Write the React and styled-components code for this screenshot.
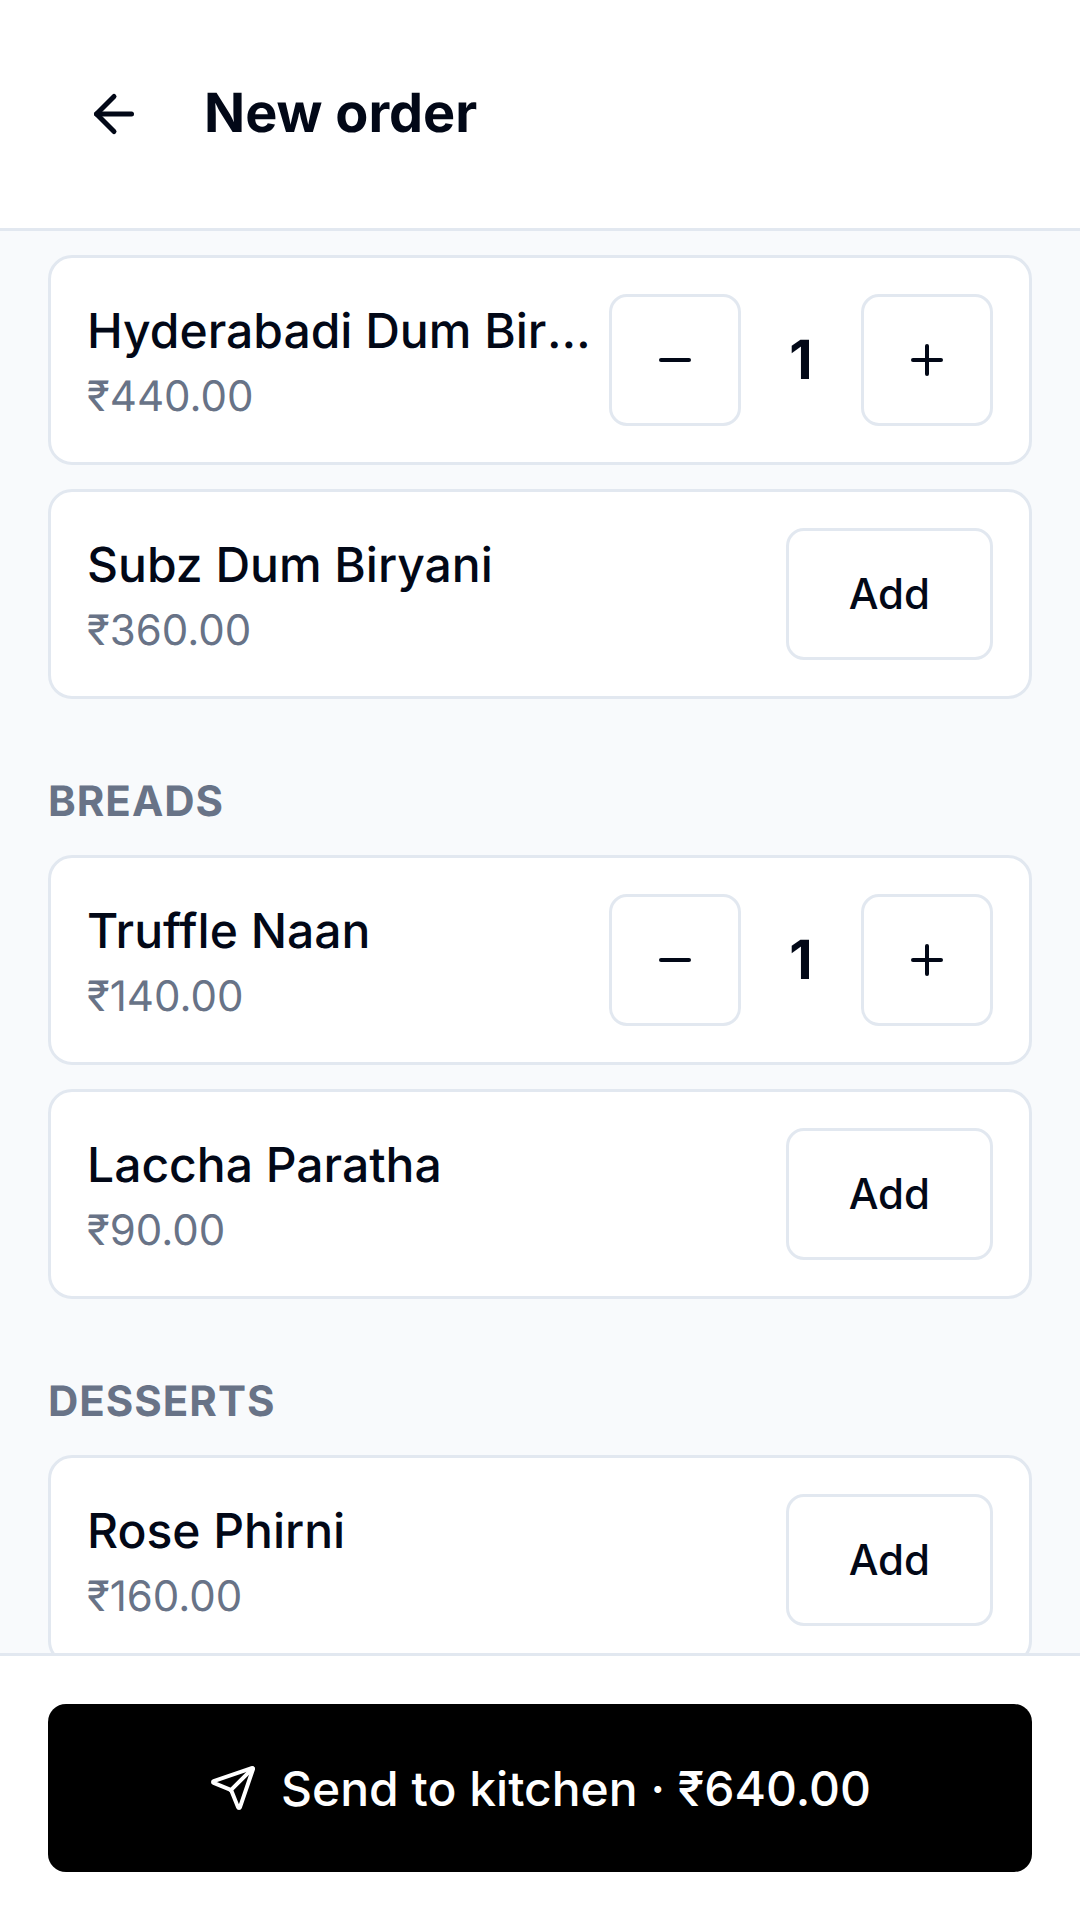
import React from "react";
import styled, { createGlobalStyle } from "styled-components";
import { ArrowLeft, Minus, Plus, Send } from "lucide-react";

const GlobalStyle = createGlobalStyle`
  html, body {
    margin: 0;
    padding: 0;
    background: #ffffff;
  }
  * {
    box-sizing: border-box;
  }
`;

const Screen = styled.div`
  width: 1080px;
  height: 1920px;
  display: flex;
  flex-direction: column;
  overflow: hidden;
  background: #f8fafc;
  color: #020817;
  font-family: Inter, "Liberation Sans", sans-serif;
  text-rendering: geometricPrecision;
`;

const Header = styled.header`
  flex: none;
  height: 231px;
  display: flex;
  align-items: center;
  gap: 24px;
  padding: 0 48px;
  background: #ffffff;
  border-bottom: 3px solid #e2e8f0;
`;

const IconButton = styled.button`
  width: 132px;
  height: 132px;
  display: flex;
  align-items: center;
  justify-content: center;
  padding: 0;
  border: none;
  background: transparent;
  color: #020817;
`;

const Title = styled.h1`
  margin: 0;
  font-size: 54px;
  line-height: 72px;
  font-weight: 700;
`;

const List = styled.main`
  flex: 1;
  min-height: 0;
  overflow: hidden;
  display: flex;
  flex-direction: column;
  gap: 72px;
  padding: 24px 48px;
`;

const Section = styled.section`
  flex: none;
  display: flex;
  flex-direction: column;
  gap: 24px;
`;

const SectionLabel = styled.h2`
  margin: 0;
  padding-top: 1px;
  height: 60px;
  font-size: 42px;
  line-height: 60px;
  font-weight: 700;
  letter-spacing: 1px;
  text-transform: uppercase;
  color: #687387;
`;

const Card = styled.div`
  height: 210px;
  display: flex;
  align-items: center;
  gap: 12px;
  padding: 0 36px;
  background: #ffffff;
  border: 3px solid #e2e8f0;
  border-radius: 24px;
`;

const ItemInfo = styled.div`
  flex: 1;
  min-width: 0;
  padding-top: 2px;
`;

const ItemName = styled.div`
  font-size: 48px;
  line-height: 72px;
  font-weight: 500;
  white-space: nowrap;
  overflow: hidden;
  text-overflow: ellipsis;
`;

const ItemPrice = styled.div`
  font-size: 42px;
  line-height: 60px;
  color: #687387;
`;

const Stepper = styled.div`
  flex: none;
  display: flex;
  align-items: center;
  gap: 12px;
`;

const OutlineButton = styled.button`
  flex: none;
  height: 132px;
  min-width: 132px;
  display: flex;
  align-items: center;
  justify-content: center;
  padding: 0 ${(p) => (p.$text ? "60px 2px" : "0")};
  background: #ffffff;
  border: 3px solid #e2e8f0;
  border-radius: 18px;
  color: #020817;
  font-family: inherit;
  font-size: 42px;
  font-weight: 500;
`;

const Qty = styled.span`
  width: 96px;
  text-align: center;
  font-size: 54px;
  font-weight: 700;
`;

const Footer = styled.footer`
  flex: none;
  height: 267px;
  padding: 48px 48px 0;
  background: #ffffff;
  border-top: 3px solid #e2e8f0;
`;

const SendButton = styled.button`
  width: 100%;
  height: 168px;
  display: flex;
  align-items: center;
  justify-content: center;
  gap: 24px;
  background: #000000;
  border: none;
  border-radius: 18px;
  color: #ffffff;
  font-family: inherit;
  font-size: 48px;
  font-weight: 500;
`;

const sections = [
  {
    items: [
      { name: "Hyderabadi Dum Biryani", price: "₹440.00", qty: 1 },
      { name: "Subz Dum Biryani", price: "₹360.00" },
    ],
  },
  {
    label: "Breads",
    items: [
      { name: "Truffle Naan", price: "₹140.00", qty: 1 },
      { name: "Laccha Paratha", price: "₹90.00" },
    ],
  },
  {
    label: "Desserts",
    items: [
      { name: "Rose Phirni", price: "₹160.00" },
      { name: "Gulab Jamun", price: "₹120.00" },
    ],
  },
];

const ItemCard = ({ name, price, qty }) => (
  <Card>
    <ItemInfo>
      <ItemName>{name}</ItemName>
      <ItemPrice>{price}</ItemPrice>
    </ItemInfo>
    {qty ? (
      <Stepper>
        <OutlineButton>
          <Minus size={48} strokeWidth={2} />
        </OutlineButton>
        <Qty>{qty}</Qty>
        <OutlineButton>
          <Plus size={48} strokeWidth={2} />
        </OutlineButton>
      </Stepper>
    ) : (
      <OutlineButton $text>Add</OutlineButton>
    )}
  </Card>
);

const App = () => (
  <Screen>
    <GlobalStyle />
    <Header>
      <IconButton>
        <ArrowLeft size={60} strokeWidth={2} />
      </IconButton>
      <Title>New order</Title>
    </Header>
    <List>
      {sections.map((section, i) => (
        <Section key={i}>
          {section.label && <SectionLabel>{section.label}</SectionLabel>}
          {section.items.map((item) => (
            <ItemCard key={item.name} {...item} />
          ))}
        </Section>
      ))}
    </List>
    <Footer>
      <SendButton>
        <Send size={48} strokeWidth={2} />
        Send to kitchen · ₹640.00
      </SendButton>
    </Footer>
  </Screen>
);

export default App;
